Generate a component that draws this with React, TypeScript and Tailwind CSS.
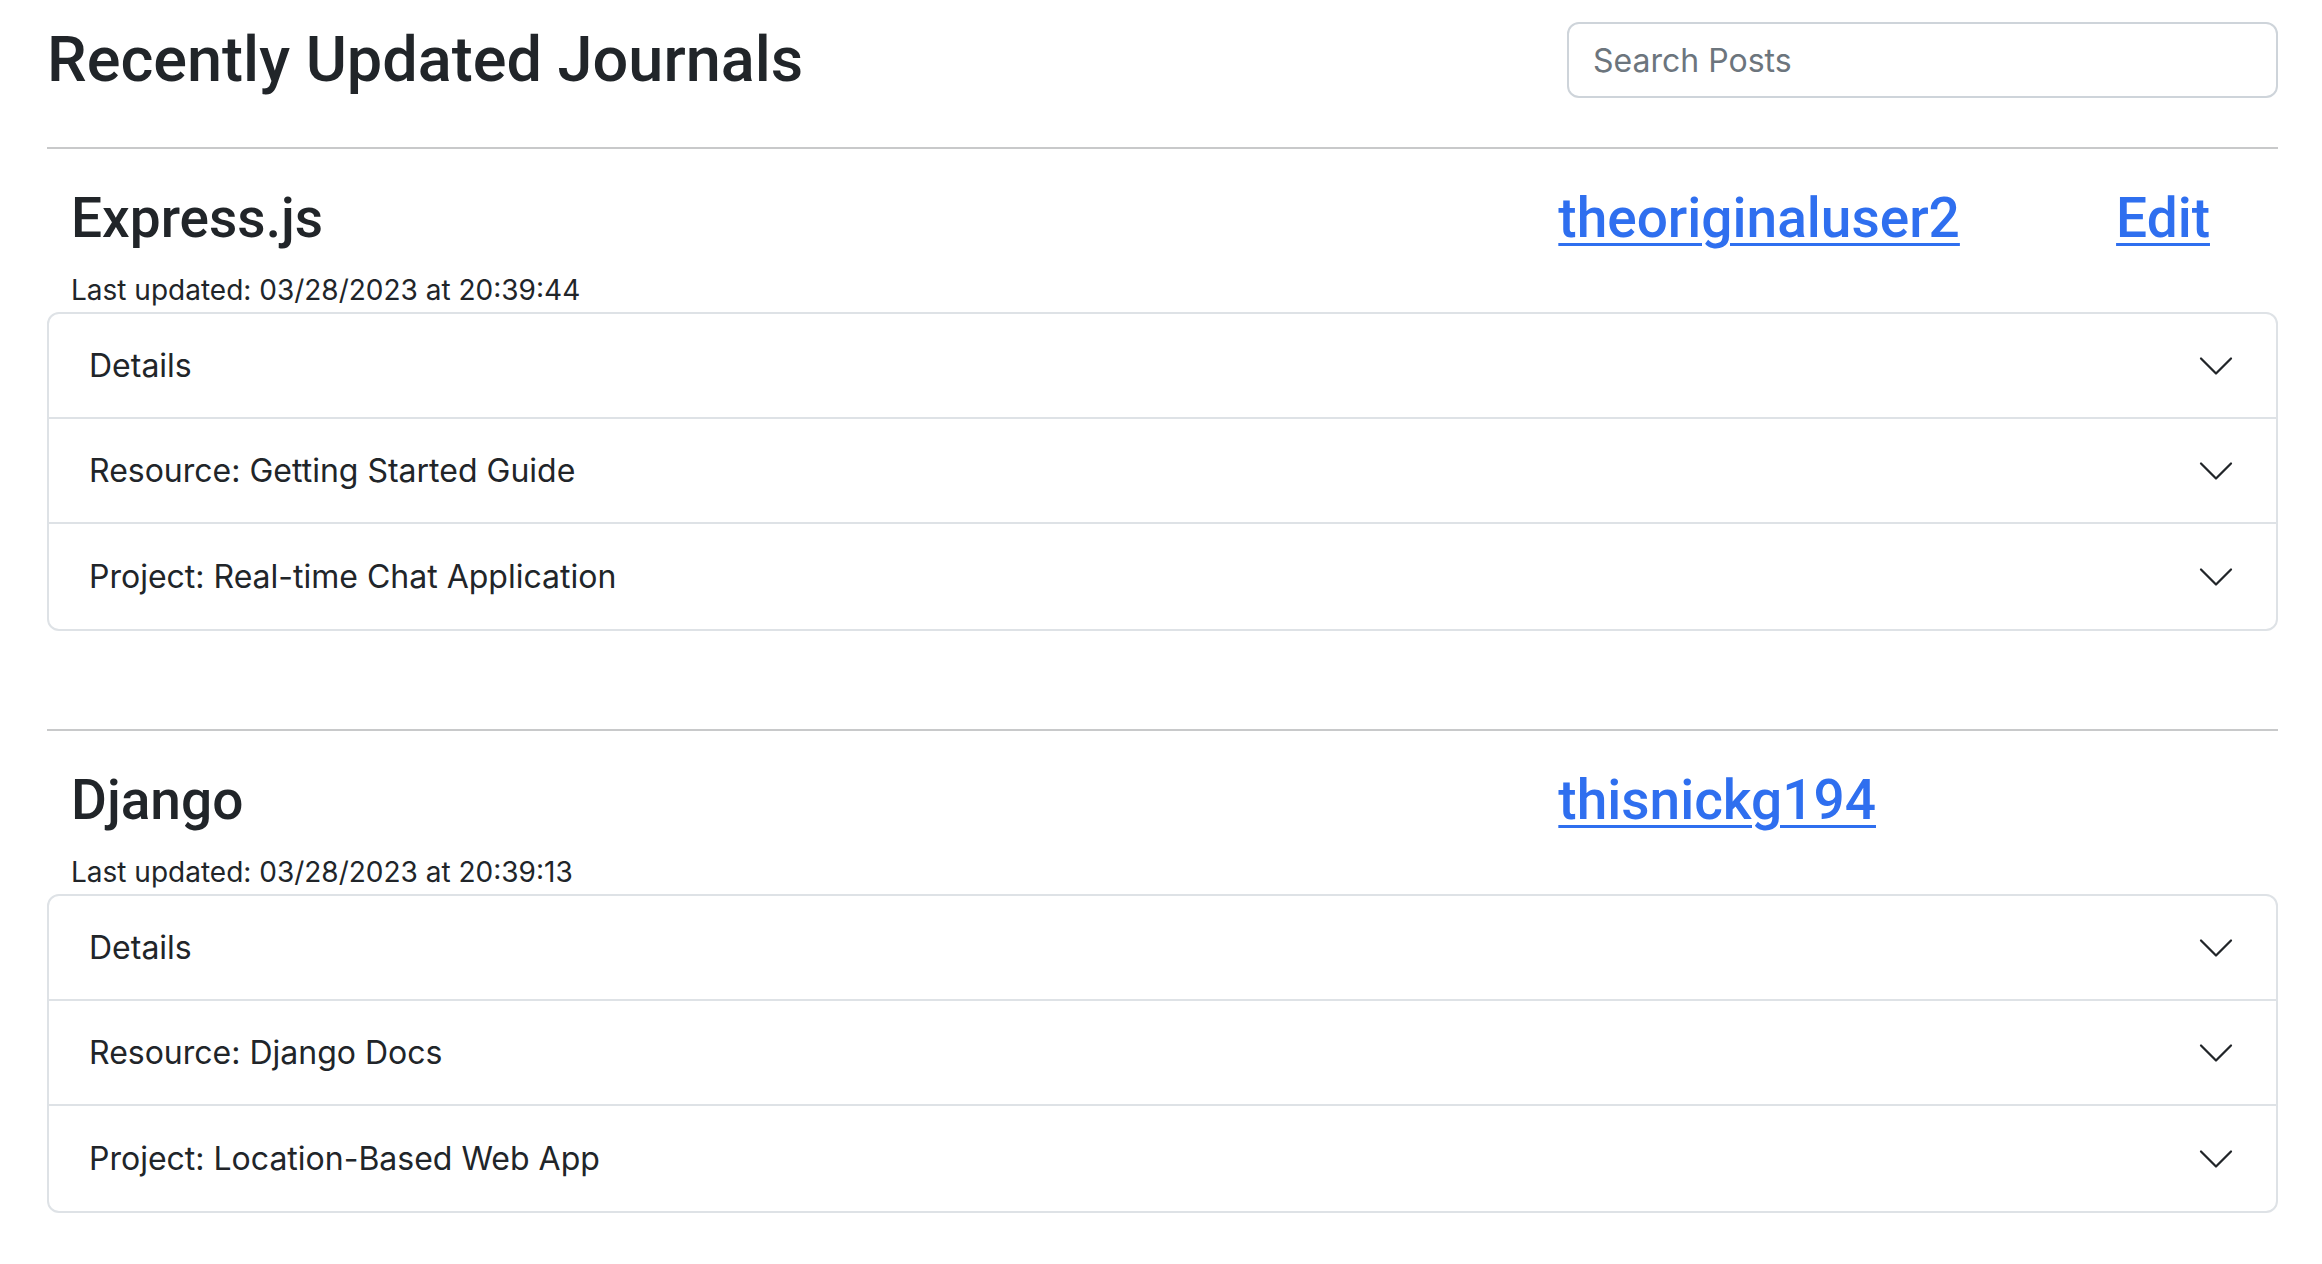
import React from 'react';

interface Journal {
  name: string;
  user: string;
  updated: string;
  canEdit: boolean;
  items: string[];
}

const journals: Journal[] = [
  {
    name: 'Express.js',
    user: 'theoriginaluser2',
    updated: '03/28/2023 at 20:39:44',
    canEdit: true,
    items: ['Details', 'Resource: Getting Started Guide', 'Project: Real-time Chat Application'],
  },
  {
    name: 'Django',
    user: 'thisnickg194',
    updated: '03/28/2023 at 20:39:13',
    canEdit: false,
    items: ['Details', 'Resource: Django Docs', 'Project: Location-Based Web App'],
  },
];

function Chevron() {
  return (
    <svg width="40" height="40" viewBox="0 0 16 16" fill="none" stroke="#212529" strokeWidth="0.9" strokeLinecap="round" strokeLinejoin="round">
      <path d="M2 5L8 11L14 5" />
    </svg>
  );
}

function JournalCard({ journal, first }: { journal: Journal; first: boolean }) {
  return (
    <section className={first ? 'mt-[49px]' : 'mt-[98px]'}>
      <div className="h-[2px] bg-[#c8c9ca]" />

      {/* header row */}
      <div className="grid grid-cols-12 mt-[36px] font-['Roboto',Arial,sans-serif] font-medium text-[55px] leading-[66px]">
        <h3 className="col-span-8 px-[24px] text-[#212529]">{journal.name}</h3>
        <div className="col-span-3 px-[24px]">
          <a href="#" className="text-[#2f6fef] underline decoration-[3px] underline-offset-[6px]">
            {journal.user}
          </a>
        </div>
        {journal.canEdit && (
          <div className="col-span-1 px-[24px]">
            <a href="#" className="text-[#2f6fef] underline decoration-[3px] underline-offset-[6px]">
              Edit
            </a>
          </div>
        )}
      </div>

      <p className="mt-[18px] px-[24px] text-[28px] leading-[42px] text-[#212529]">
        Last updated: {journal.updated}
      </p>

      {/* accordion */}
      <div className="mt-[1px] rounded-[12px] border-2 border-[#dee2e6] overflow-hidden">
        {journal.items.map((item, i) => (
          <div
            key={item}
            className={`flex items-center justify-between h-[105px] px-[40px] ${i < journal.items.length - 1 ? 'border-b-2 border-[#dee2e6]' : ''}`}
          >
            <span className="text-[32px] text-[#212529]">{item}</span>
            <Chevron />
          </div>
        ))}
      </div>
    </section>
  );
}

export default function App() {
  return (
    <div className="min-h-[1264px] bg-white pl-[47px] pr-[44px] pt-[22px] font-['Inter','Liberation_Sans',sans-serif]">
      <div className="flex items-start justify-between">
        <h2 className="font-['Roboto',Arial,sans-serif] font-medium text-[63px] leading-[76px] text-[#212529]">
          Recently Updated Journals
        </h2>
        <input
          type="text"
          placeholder="Search Posts"
          className="w-[711px] h-[76px] rounded-[12px] border-2 border-[#ced4da] px-[24px] text-[32px] text-[#212529] placeholder:text-[#6c757d] outline-none"
        />
      </div>

      {journals.map((j, i) => (
        <JournalCard key={j.name} journal={j} first={i === 0} />
      ))}
    </div>
  );
}
